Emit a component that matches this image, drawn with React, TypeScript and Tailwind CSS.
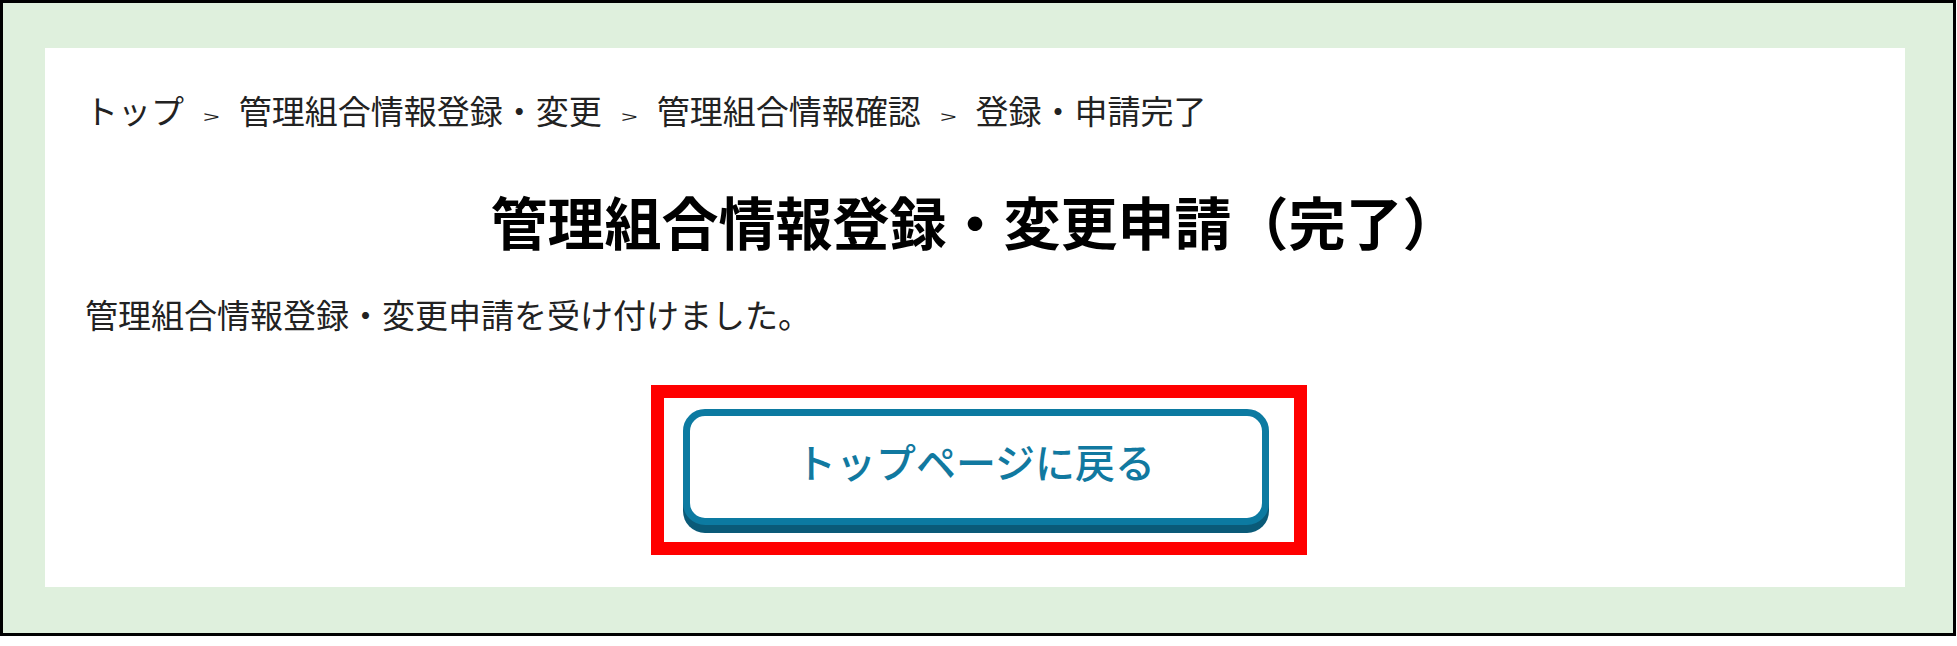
import React from 'react';

const crumbs = ['トップ', '管理組合情報登録・変更', '管理組合情報確認', '登録・申請完了'];

const Sep = () => (
  <span className="mx-[21px] inline-block scale-x-[1.3] scale-y-[0.7] text-[22px] font-['Liberation_Sans',sans-serif] text-[#222]">&gt;</span>
);

export default function App() {
  return (
    <div className="w-[1956px] h-[636px] border-[3px] border-black bg-[#dff0dd] pt-[45px] pl-[42px] pr-[48px] pb-[46px] flex font-['Noto_Sans_CJK_JP',sans-serif]">
      <div className="flex-1 bg-white flex flex-col pl-[40px] pr-[40px] pt-[38px]">
        {/* breadcrumb */}
        <nav className="flex items-baseline h-[48px] text-[33px] leading-[48px] text-[#222]">
          {crumbs.map((c, i) => (
            <React.Fragment key={c}>
              {i > 0 && <Sep />}
              <span>{c}</span>
            </React.Fragment>
          ))}
        </nav>

        <h1 className="mt-[53px] text-center text-[57px] leading-[66px] font-bold text-black">
          管理組合情報登録・変更申請（完了）
        </h1>

        <p className="mt-[37px] text-[33px] leading-[48px] text-[#222]">
          管理組合情報登録・変更申請を受け付けました。
        </p>

        <div className="mt-[47px] self-center ml-[7px] border-[13px] border-[#ff0000] pl-[19px] pr-[25px] pt-[11px] pb-[17px]">
          <button className="w-[586px] h-[116px] flex items-center justify-center pb-[13px] rounded-[22px] border-[7px] border-[#0c7aa1] bg-white shadow-[0_8px_0_#0a5a78] text-[40px] leading-[60px] font-medium text-[#1179a0]">
            トップページに戻る
          </button>
        </div>
      </div>
    </div>
  );
}
